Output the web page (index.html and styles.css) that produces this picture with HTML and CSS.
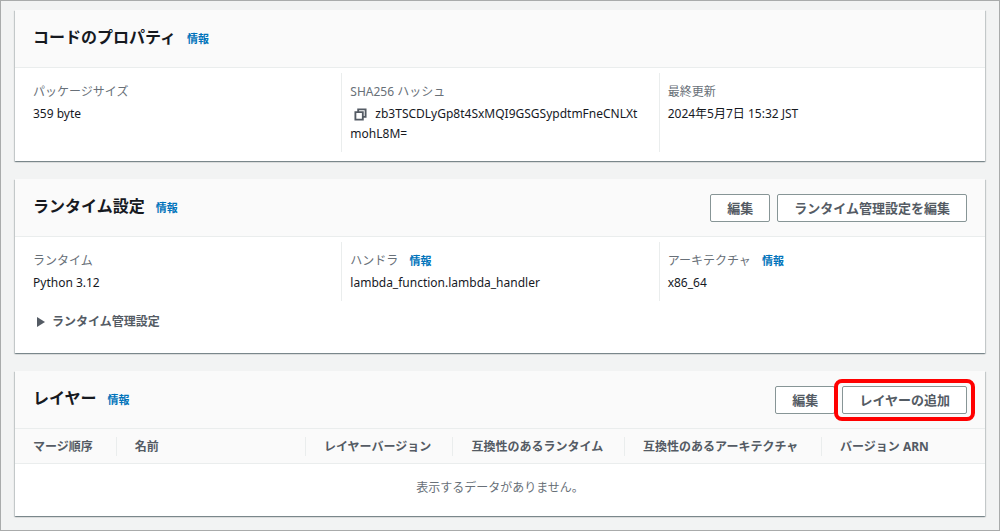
FILE: index.html
```html
<!DOCTYPE html>
<html lang="ja">
<head>
<meta charset="utf-8">
<meta name="viewport" content="width=device-width, initial-scale=1">
<title>Lambda 関数</title>
<link rel="stylesheet" href="styles.css">
</head>
<body>
<main class="page">
  <section class="card">
    <header class="card-header">
      <h2 class="card-title">コードのプロパティ</h2>
      <a class="info" href="#">情報</a>
    </header>
    <dl class="columns">
      <div class="column">
        <dt class="label">パッケージサイズ</dt>
        <dd class="value">359 byte</dd>
      </div>
      <div class="column">
        <dt class="label">SHA256 ハッシュ</dt>
        <dd class="value hash"><button class="copy" type="button" aria-label="コピー"><svg class="copy-icon" viewBox="0 0 14 14" aria-hidden="true"><path d="M4.5 4V1.5h8v8H10M1.5 4.5h8v8h-8z"/></svg></button>zb3TSCDLyGp8t4SxMQI9GSGSypdtmFneCNLXtmohL8M=</dd>
      </div>
      <div class="column">
        <dt class="label">最終更新</dt>
        <dd class="value">2024年5月7日 15:32 JST</dd>
      </div>
    </dl>
  </section>

  <section class="card">
    <header class="card-header">
      <h2 class="card-title">ランタイム設定</h2>
      <a class="info" href="#">情報</a>
      <div class="actions">
        <button class="button" type="button">編集</button>
        <button class="button" type="button">ランタイム管理設定を編集</button>
      </div>
    </header>
    <dl class="columns">
      <div class="column">
        <dt class="label">ランタイム</dt>
        <dd class="value">Python 3.12</dd>
      </div>
      <div class="column">
        <dt class="label">ハンドラ <a class="info" href="#">情報</a></dt>
        <dd class="value">lambda_function.lambda_handler</dd>
      </div>
      <div class="column">
        <dt class="label">アーキテクチャ <a class="info" href="#">情報</a></dt>
        <dd class="value">x86_64</dd>
      </div>
    </dl>
    <button class="expander" type="button" aria-expanded="false"><svg class="caret" viewBox="0 0 8 10" aria-hidden="true"><path d="M0 0v10L8 5z"/></svg>ランタイム管理設定</button>
  </section>

  <section class="card">
    <header class="card-header">
      <h2 class="card-title">レイヤー</h2>
      <a class="info" href="#">情報</a>
      <div class="actions">
        <button class="button" type="button">編集</button>
        <span class="highlight"><button class="button" type="button">レイヤーの追加</button></span>
      </div>
    </header>
    <table class="table">
      <colgroup>
        <col class="col-order"><col class="col-name"><col class="col-version"><col class="col-runtime"><col class="col-arch"><col>
      </colgroup>
      <thead>
        <tr>
          <th scope="col"><span class="th-text">マージ順序</span></th>
          <th scope="col"><span class="th-text">名前</span></th>
          <th scope="col"><span class="th-text">レイヤーバージョン</span></th>
          <th scope="col"><span class="th-text">互換性のあるランタイム</span></th>
          <th scope="col"><span class="th-text">互換性のあるアーキテクチャ</span></th>
          <th scope="col"><span class="th-text">バージョン ARN</span></th>
        </tr>
      </thead>
      <tbody>
        <tr><td class="empty" colspan="6">表示するデータがありません。</td></tr>
      </tbody>
    </table>
  </section>
</main>
</body>
</html>
```
FILE: styles.css
```css
* {
  box-sizing: border-box;
}

body {
  margin: 0;
  background: #f2f3f3;
  color: #16191f;
  font-family: "Noto Sans", "Noto Sans CJK JP", sans-serif;
  font-size: 12px;
  line-height: 20px;
}

button {
  font: inherit;
  cursor: pointer;
}

.page {
  display: flex;
  flex-direction: column;
  gap: 18px;
  min-height: 100vh;
  padding: 9px 14px 13px;
  border: 1px solid #a9abab;
}

.card {
  background: #fff;
  box-shadow: 0 1px 1px rgba(0, 28, 36, 0.3), 1px 1px 1px rgba(0, 28, 36, 0.15), -1px 1px 1px rgba(0, 28, 36, 0.15);
}

.card-header {
  display: flex;
  gap: 11px;
  min-height: 58px;
  padding: 15px 18px 14px;
  background: #fafafa;
  border-bottom: 1px solid #eaeded;
}

.card-title {
  margin: 0;
  font-size: 16px;
  line-height: 24px;
  font-weight: 700;
}

.info {
  color: #0073bb;
  font-size: 11px;
  font-weight: 700;
  text-decoration: none;
}

.card-header .info {
  line-height: 28px;
}

.label .info {
  margin-left: 8px;
}

.actions {
  display: flex;
  gap: 7px;
  margin-left: auto;
}

.button {
  height: 28px;
  padding: 0 16px;
  border: 1px solid #879596;
  border-radius: 2px;
  background: #fff;
  color: #545b64;
  font-size: 13px;
  font-weight: 700;
  line-height: 24px;
  white-space: nowrap;
}

.highlight {
  position: relative;
}

.highlight::after {
  content: "";
  position: absolute;
  inset: -7px -8px;
  border: 4px solid #f00;
  border-radius: 8px;
  pointer-events: none;
}

.columns {
  display: grid;
  grid-template-columns: repeat(3, 1fr);
  margin: 0;
  padding: 5px 9px 9px;
}

.column {
  min-width: 0;
  padding: 9px 8px 8px;
  border-left: 1px solid #eaeded;
}

.column:first-child {
  border-left-color: transparent;
}

.label {
  margin-bottom: 2px;
  color: #687078;
}

.value {
  margin: 0;
}

.hash {
  padding-right: 10px;
  word-break: break-all;
}

.copy {
  padding: 0;
  margin: 0 8px 0 4px;
  border: 0;
  background: none;
  vertical-align: middle;
  line-height: 0;
}

.copy-icon {
  width: 13px;
  height: 13px;
  fill: none;
  stroke: #545b64;
  stroke-width: 2;
}

.expander {
  display: flex;
  align-items: center;
  gap: 7px;
  margin: 2px 0 21px 22px;
  padding: 0;
  border: 0;
  background: none;
  color: #545b64;
  font-weight: 700;
}

.caret {
  width: 8px;
  height: 10px;
  fill: #545b64;
}

.table {
  width: 100%;
  border-collapse: collapse;
  table-layout: fixed;
}

.col-order { width: 10.5%; }
.col-name { width: 19.5%; }
.col-version { width: 15.2%; }
.col-runtime { width: 17.7%; }
.col-arch { width: 20.3%; }

.table th {
  padding: 8px 0 7px;
  background: #fafafa;
  border-bottom: 1px solid #eaeded;
  color: #545b64;
  text-align: left;
  white-space: nowrap;
}

.th-text {
  display: block;
  padding-left: 18px;
  border-right: 1px solid #eaeded;
  line-height: 19px;
}

.table th:last-child .th-text {
  border-right: 0;
}

.empty {
  padding: 14px 18px 18px;
  color: #687078;
  text-align: center;
}
```
